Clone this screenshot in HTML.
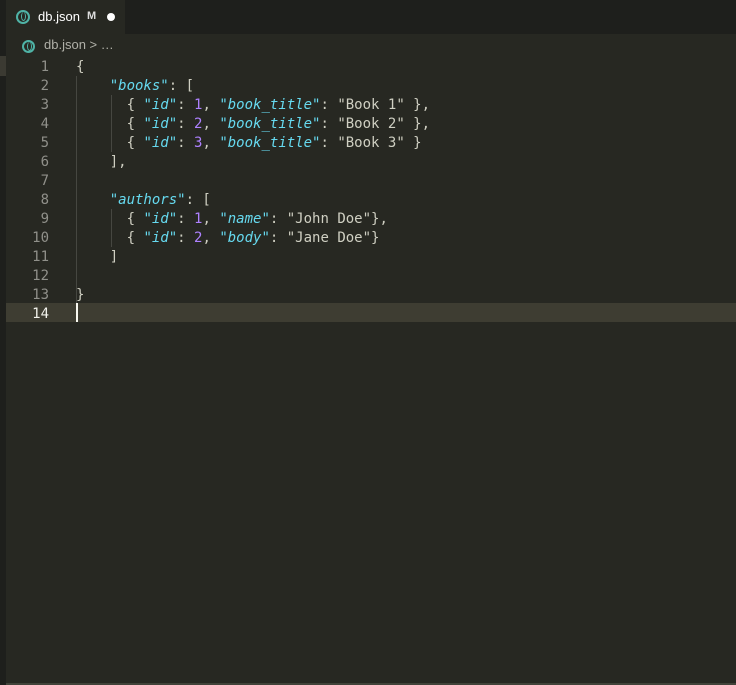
<!DOCTYPE html>
<html><head><style>
body{margin:0;width:736px;height:685px;background:#272822;overflow:hidden;position:relative;font-family:"Liberation Sans",sans-serif}
.tabs{position:absolute;left:0;top:0;width:736px;height:34px;background:#1e1f1c}
.tab{position:absolute;left:6px;top:0;width:119px;height:34px;background:#272822;color:#fff;font-size:13px}
.ic{position:absolute;width:10px;height:10px;border:2px solid #4fb3a6;border-radius:50%}
.ic:after{content:"";position:absolute;left:3px;top:0;width:3px;height:8px;border:1px solid #4fb3a6;border-radius:50%;border-top:none}
.left{position:absolute;left:0;top:0;width:6px;height:685px;background:#1e1f1c}
.lbar{position:absolute;left:0;top:56px;width:6px;height:20px;background:#3b3a32}
.bc{position:absolute;left:44px;top:37px;color:#b0b0a8;font-size:13px}
.code{position:absolute;top:58px;left:0;font-family:"DejaVu Sans Mono",monospace;font-size:14px;line-height:19px;white-space:pre;color:#cfcfc2}
.ln{position:absolute;left:0;width:49px;text-align:right;color:#90908a}
.tx{position:absolute;left:76px}
.k{color:#66d9ef;font-style:italic}.n{color:#ae81ff}
.g{position:absolute;width:1px;background:#464741}
.cur{position:absolute;left:6px;top:303px;width:730px;height:19px;background:#3e3d32}
.caret{position:absolute;left:76px;top:303px;width:2px;height:19px;background:#f8f8f0}
.bot{position:absolute;left:6px;top:683px;width:730px;height:2px;background:#414339}
</style></head><body>
<div class="tabs"><div class="tab" style="left:0;width:125px">
<div class="ic" style="left:16px;top:10px"></div>
<span style="position:absolute;left:38px;top:9px">db.json</span>
<span style="position:absolute;left:87px;top:10px;font-size:11px;font-weight:bold;color:#ddd">M</span>
<span style="position:absolute;left:107px;top:13px;width:8px;height:8px;border-radius:50%;background:#fff"></span>
</div></div>
<div class="left"></div><div class="lbar"></div>
<div class="ic" style="left:22px;top:40px;width:9px;height:9px"></div>
<div class="bc">db.json &gt; …</div>
<div class="cur"></div>
<div class="g" style="left:76px;top:76px;height:227px"></div>
<div class="g" style="left:111px;top:95px;height:57px"></div>
<div class="g" style="left:111px;top:209px;height:38px"></div>
<div class="code">
<div class="ln" style="top:0">1</div><div class="ln" style="top:19px">2</div><div class="ln" style="top:38px">3</div><div class="ln" style="top:57px">4</div><div class="ln" style="top:76px">5</div><div class="ln" style="top:95px">6</div><div class="ln" style="top:114px">7</div><div class="ln" style="top:133px">8</div><div class="ln" style="top:152px">9</div><div class="ln" style="top:171px">10</div><div class="ln" style="top:190px">11</div><div class="ln" style="top:209px">12</div><div class="ln" style="top:228px">13</div><div class="ln" style="top:247px;color:#f2f2ec">14</div>
<div class="tx" style="top:0">{
    <span class="k">"books"</span>: [
      { <span class="k">"id"</span>: <span class="n">1</span>, <span class="k">"book_title"</span>: "Book 1" },
      { <span class="k">"id"</span>: <span class="n">2</span>, <span class="k">"book_title"</span>: "Book 2" },
      { <span class="k">"id"</span>: <span class="n">3</span>, <span class="k">"book_title"</span>: "Book 3" }
    ],

    <span class="k">"authors"</span>: [
      { <span class="k">"id"</span>: <span class="n">1</span>, <span class="k">"name"</span>: "John Doe"},
      { <span class="k">"id"</span>: <span class="n">2</span>, <span class="k">"body"</span>: "Jane Doe"}
    ]

}</div>
</div>
<div class="caret"></div>
<div class="bot"></div>
</body></html>
